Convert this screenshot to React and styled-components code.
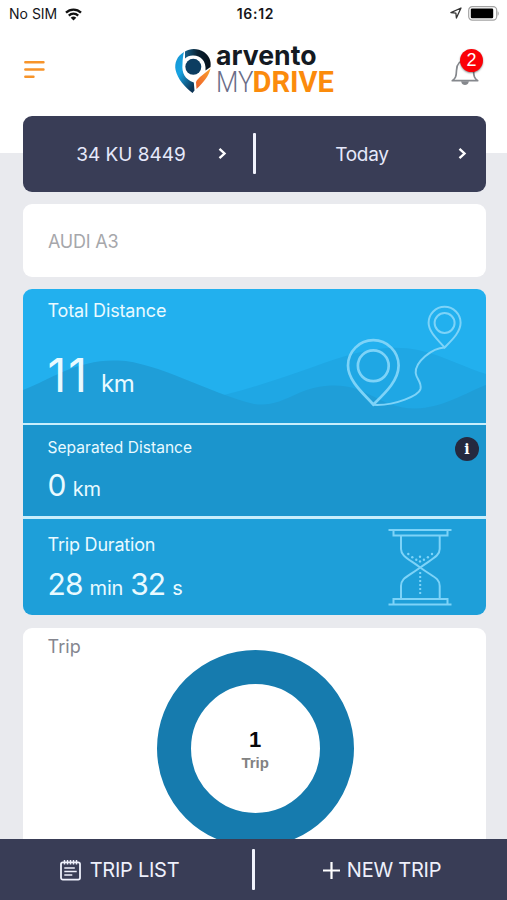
import styled, { createGlobalStyle } from "styled-components";

const GlobalStyle = createGlobalStyle`
  * {
    box-sizing: border-box;
  }

  body {
    margin: 0;
    font-family: Inter, "Liberation Sans", sans-serif;
  }
`;

// Whole screen, white behind the header and grey below it
const Screen = styled.div`
  display: flex;
  flex-direction: column;
  width: 507px;
  height: 900px;
  overflow: hidden;
  background: linear-gradient(#fff 153.5px, #e9eaee 153.5px);
`;

// Status bar
const StatusBar = styled.div`
  display: grid;
  grid-template-columns: 1fr auto 1fr;
  align-items: center;
  flex: none;
  height: 28px;
  padding: 0 8px 0 9px;
  font-size: 14px;
  line-height: 28px;
  color: #16161a;
`;

const Carrier = styled.div`
  display: flex;
  align-items: center;
  gap: 8px;
`;

const Clock = styled.div`
  padding-left: 3px;
  font-weight: 600;
  letter-spacing: 0.7px;
`;

const StatusIcons = styled.div`
  display: flex;
  align-items: center;
  justify-content: flex-end;
  gap: 6px;
  padding-bottom: 2px;
`;

// Header
const Header = styled.header`
  display: flex;
  align-items: center;
  justify-content: space-between;
  flex: none;
  height: 88px;
  padding: 0 28px 6px 24px;
`;

const IconButton = styled.button`
  position: relative;
  display: flex;
  padding: ${(props) => props.$drop || 0}px 0 0;
  border: 0;
  background: none;
`;

const LogoMark = styled.svg`
  margin: 2px 0 0 13px;
  overflow: visible;
`;

const Badge = styled.span`
  position: absolute;
  top: -4px;
  right: -4px;
  width: 23px;
  height: 23px;
  border-radius: 50%;
  background: #fb0007;
  box-shadow: 0 1px 2px rgba(0, 0, 0, 0.45);
  color: #fff;
  font-size: 18px;
  font-weight: 500;
  line-height: 23px;
  text-align: center;
`;

// Scrolling content
const Content = styled.main`
  display: flex;
  flex-direction: column;
  flex: 1;
  gap: 12.5px;
  min-height: 0;
  padding: 0 21px 0 23px;
  overflow: hidden;
`;

const Selector = styled.div`
  display: grid;
  grid-template-columns: 230px 3px 230px;
  align-items: center;
  flex: none;
  height: 75.5px;
  border-radius: 9px;
  background: #393d56;
`;

const SelectorItem = styled.button`
  display: flex;
  align-items: center;
  padding: 0 ${(props) => props.$end}px 0 ${(props) => props.$start}px;
  border: 0;
  background: none;
  color: #e6e9fb;
  font-family: inherit;
  font-size: 19px;
  letter-spacing: ${(props) => props.$spacing}px;
  line-height: 24px;
`;

const SelectorLabel = styled.span`
  flex: 1;
  padding-top: 2px;
  text-align: center;
`;

const Divider = styled.span`
  width: 3px;
  height: 41px;
  border-radius: 1px;
  background: #f1f3fc;
`;

const VehicleCard = styled.div`
  display: flex;
  align-items: center;
  flex: none;
  height: 72.5px;
  padding: 2px 0 0 25px;
  border-radius: 9px;
  background: #fff;
  color: #a6a7ab;
  font-size: 18px;
  letter-spacing: -0.2px;
`;

// Distance and duration panels
const Stats = styled.section`
  display: flex;
  flex-direction: column;
  flex: none;
  gap: 2.5px;
  height: 326px;
  border-radius: 9px;
  overflow: hidden;
  background: #c8eefc;
`;

const Panel = styled.div`
  position: relative;
  flex: none;
  height: ${(props) => props.$height}px;
  padding: ${(props) => props.$top}px 0 0 24.5px;
  background: ${(props) => props.$color};
  color: #e9faff;
`;

const PanelTitle = styled.div`
  position: relative;
  font-size: ${(props) => props.$size}px;
  letter-spacing: ${(props) => props.$spacing}px;
  line-height: 22px;
`;

const Reading = styled.div`
  position: relative;
  display: flex;
  align-items: baseline;
  margin-top: ${(props) => props.$top}px;
  line-height: ${(props) => props.$line}px;
`;

const Amount = styled.span`
  font-size: ${(props) => props.$size}px;
  font-weight: ${(props) => props.$weight || 400};
  letter-spacing: ${(props) => props.$spacing}px;
`;

const Unit = styled.span`
  margin: 0 ${(props) => props.$after || 0}px 0 ${(props) => props.$before}px;
  font-size: ${(props) => props.$size}px;
  letter-spacing: ${(props) => props.$spacing || 0}px;
`;

const Backdrop = styled.svg`
  position: absolute;
  top: 0;
  left: 0;
`;

const PanelArt = styled.svg`
  position: absolute;
  top: ${(props) => props.$top}px;
  right: ${(props) => props.$right}px;
  fill: none;
  stroke: #7dd3f8;
`;

const InfoButton = styled.button`
  position: absolute;
  top: 12px;
  right: 7px;
  display: flex;
  align-items: center;
  justify-content: center;
  width: 24px;
  height: 24px;
  padding: 0;
  border: 0;
  border-radius: 50%;
  background: #25293f;
  color: #fff;
  font-family: "DejaVu Serif", serif;
  font-size: 14px;
  font-weight: 700;
  line-height: 24px;
`;

// Trip chart
const TripCard = styled.section`
  flex: none;
  height: 260px;
  padding-top: 8px;
  border-radius: 9px;
  background: #fff;
`;

const TripTitle = styled.div`
  padding-left: 24.5px;
  color: #85868f;
  font-size: 18px;
  letter-spacing: 0.1px;
  line-height: 22px;
`;

const Ring = styled.div`
  display: flex;
  flex-direction: column;
  align-items: center;
  justify-content: center;
  width: 197px;
  height: 197px;
  margin: -8px 0 0 133.7px;
  border: 34px solid #167bae;
  border-radius: 50%;
  font-family: "Liberation Sans", Arial, sans-serif;
  font-weight: 700;
`;

const RingValue = styled.div`
  margin-top: 6px;
  color: #08080a;
  font-size: 22px;
  line-height: 24px;
`;

const RingLabel = styled.div`
  color: #828282;
  font-size: 15px;
  line-height: 22px;
`;

// Bottom actions
const Footer = styled.footer`
  display: grid;
  grid-template-columns: 252px 3px 252px;
  align-items: center;
  flex: none;
  height: 61px;
  background: #393d56;
`;

const FooterButton = styled.button`
  display: flex;
  align-items: center;
  justify-content: center;
  gap: ${(props) => props.$gap}px;
  padding: 1px ${(props) => props.$end}px 0 ${(props) => props.$start || 0}px;
  border: 0;
  background: none;
  color: #eef0fb;
  font-family: inherit;
  font-size: 20px;
  letter-spacing: -0.25px;
  line-height: 24px;
`;

const WifiIcon = () => (
  <svg width="17" height="13" viewBox="0 0 17 13">
    <g fill="none" stroke="#111" strokeWidth="2.3">
      <path d="M1 4.6a10.8 10.8 0 0 1 15 0" />
      <path d="M3.8 7.6a6.8 6.8 0 0 1 9.4 0" />
    </g>
    <path d="M8.5 12.6 5.7 9.8a4 4 0 0 1 5.6 0Z" fill="#111" />
  </svg>
);

const LocationIcon = () => (
  <svg width="12" height="12" viewBox="0 0 12 12">
    <path
      d="M11 1 .9 5.6l5 .6.5 4.8Z"
      fill="none"
      stroke="#333"
      strokeWidth="1.3"
      strokeLinejoin="round"
    />
  </svg>
);

const BatteryIcon = () => (
  <svg width="31" height="15" viewBox="0 0 31 15">
    <rect x=".7" y=".7" width="28" height="13.4" rx="3.6" fill="none" stroke="#a3a3a3" strokeWidth="1.2" />
    <rect x="2.8" y="2.6" width="22.4" height="9.7" rx="1.2" fill="#000" />
    <path d="M29.6 5.2c1.5.5 1.5 4 0 4.5Z" fill="#a3a3a3" />
  </svg>
);

const MenuIcon = () => (
  <svg width="21" height="19" viewBox="0 0 21 19">
    <path
      d="M1.3 2.2h18.2M1.3 9.5h18.2M1.3 16.8h8.2"
      stroke="#f7942a"
      strokeWidth="2.4"
      strokeLinecap="round"
    />
  </svg>
);

const Logo = () => (
  <LogoMark width="162" height="52" viewBox="0 0 162 52">
    <defs>
      <linearGradient id="pinBlue" x1="0" y1="0" x2=".7" y2="1">
        <stop offset="0" stopColor="#1793d0" />
        <stop offset=".45" stopColor="#16a4e4" />
        <stop offset="1" stopColor="#0d3556" />
      </linearGradient>
      <linearGradient id="pinDark" x1="0" y1="0" x2="1" y2="0">
        <stop offset="0" stopColor="#16608a" />
        <stop offset=".5" stopColor="#0a2233" />
        <stop offset="1" stopColor="#071019" />
      </linearGradient>
      <linearGradient id="pinOrange" x1="1" y1="0" x2="0" y2="1">
        <stop offset="0" stopColor="#f9a12c" />
        <stop offset="1" stopColor="#ee5f2b" />
      </linearGradient>
    </defs>
    <path
      d="M10 8C3 12 .3 19 1.6 26C3.5 35 11 43 18.5 49L20.5 46.5L19.8 38.5C11 35.5 7.5 29 8.5 20C8.7 15 9 12 10 8Z"
      fill="url(#pinBlue)"
    />
    <path
      d="M11 7.5C16 4 24 4 30 8C35 11.5 37.5 17 36.5 23L31.5 26.5C32.5 16.5 26 11 18.5 11.5C15.5 11.6 13 12.5 11 14.5Z"
      fill="url(#pinDark)"
    />
    <path d="M36.5 24.5C35 32 29 39 22.5 45L22 38C24 33.5 31 29.5 36.5 24.5Z" fill="url(#pinOrange)" />
    <circle cx="19.3" cy="22.8" r="8" fill="#0c3d61" />
    <text
      x="42"
      y="21"
      fill="#141a22"
      fontFamily="Inter, sans-serif"
      fontSize="27"
      fontWeight="700"
      textLength="100.5"
      lengthAdjust="spacingAndGlyphs"
    >
      arvento
    </text>
    <text
      x="42"
      y="47.5"
      fill="#6b6d88"
      fontFamily="Roboto, sans-serif"
      fontSize="29"
      fontWeight="300"
      textLength="37.5"
      lengthAdjust="spacingAndGlyphs"
    >
      MY
    </text>
    <text
      x="78.5"
      y="47.5"
      fill="#fb8b0c"
      fontFamily="Roboto, sans-serif"
      fontSize="29"
      fontWeight="700"
      textLength="81.5"
      lengthAdjust="spacingAndGlyphs"
    >
      DRIVE
    </text>
  </LogoMark>
);

const BellIcon = () => (
  <svg width="28" height="28" viewBox="0 0 28 28" fill="none" stroke="#85888d" strokeWidth="1.7">
    <path
      d="M1.3 22.7C4.5 20.5 5.3 18.5 5.5 12.5C5.7 6.5 8.5 2.5 14 2.5S22.3 6.5 22.5 12.5C22.7 18.5 23.5 20.5 26.7 22.7Z"
      strokeLinejoin="round"
    />
    <path d="M11.2 24a2.9 2.9 0 0 0 5.6 0Z" fill="#85888d" />
  </svg>
);

const ChevronIcon = () => (
  <svg width="9" height="13" viewBox="0 0 9 13">
    <path d="m1.5 1.8 5 4.7-5 4.7" fill="none" stroke="#fff" strokeWidth="2.4" />
  </svg>
);

const Hills = () => (
  <Backdrop width="463" height="134" viewBox="0 0 463 134">
    <path d="M170 113C215 104 250 92 290 78C325 65 360 54 395 61C422 67 445 80 463 85V134H170Z" fill="#1fa7e4" />
    <path
      d="M0 101C28 90 55 70 95 71.5C135 73 185 104 231 115C262 119 272 98 308 96.5C345 95 355 119 392 119.5C420 119 442 104 463 96V134H0Z"
      fill="#1f9ed8"
    />
  </Backdrop>
);

const RouteArt = () => (
  <PanelArt width="116" height="104" viewBox="0 0 116 104" $top={15} $right={24} strokeWidth="2">
    <g strokeWidth="2.7">
      <path d="M27.3 100.5C18 90 2 77 2 61.5a25.3 25.3 0 0 1 50.6 0C52.6 77 38 90 27.3 100.5Z" />
      <circle cx="27.3" cy="61.8" r="15.4" />
    </g>
    <path d="M98.6 43.5C92 36 82.6 28 82.6 18.8a16 16 0 0 1 32 0C114.6 28 106 36 98.6 43.5Z" />
    <circle cx="98.6" cy="19" r="10" />
    <path d="M98.6 43.5C86 44 69 58 69.7 69C70.3 75 76 78 74.5 85C73 91 50 102 27.3 100.8" />
  </PanelArt>
);

// Sand grains in the upper bulb
const GRAINS = [
  [20.3, 26],
  [24.3, 29.3],
  [28.3, 31.8],
  [32, 28.8],
  [32, 33.4],
  [35.9, 31.8],
  [39.9, 29.3],
  [44, 26],
];

const HourglassArt = () => (
  <PanelArt width="64" height="79" viewBox="0 0 64 79" $top={9} $right={34} strokeWidth="2">
    <path d="M.5 2h63M5.5 2v5.5h54V2M.5 76.5h63M5.5 76.5V71h54v5.5" />
    <path d="M13 7.5V21C13 28 20 30.500 32.200 39.500C45 49 51.700 50 51.700 58V71M51.700 7.500V21C51.700 28 44.500 30.500 32.200 39.500C19.500 49 13 50 13 58V71" />
    <path d="M32.2 44v22" strokeDasharray="2 2" />
    {GRAINS.map(([x, y]) => (
      <circle key={`${x}-${y}`} cx={x} cy={y} r="1.2" fill="#7dd3f8" stroke="none" />
    ))}
  </PanelArt>
);

const ListIcon = () => (
  <svg width="21" height="22" viewBox="0 0 21 22" fill="none" stroke="#eef0fb" strokeWidth="1.8">
    <rect x="1" y="3.3" width="19" height="17.3" rx="1.8" />
    <path d="M4.5 1v4.5M7.5 1v4.5M10.5 1v4.5M13.5 1v4.5M16.5 1v4.5" strokeWidth="1.5" />
    <path d="M4.3 9h10.5M4.3 12.5h12.4M4.3 16h8" strokeWidth="1.6" />
  </svg>
);

const PlusIcon = () => (
  <svg width="17" height="17" viewBox="0 0 17 17">
    <path d="M8.5 0v17M0 8.5h17" stroke="#fff" strokeWidth="2.2" />
  </svg>
);

const App = () => {
  return (
    <>
      <GlobalStyle />
      <Screen>
        <StatusBar>
          <Carrier>
            No SIM
            <WifiIcon />
          </Carrier>
          <Clock>16:12</Clock>
          <StatusIcons>
            <LocationIcon />
            <BatteryIcon />
          </StatusIcons>
        </StatusBar>

        <Header>
          <IconButton aria-label="Menu">
            <MenuIcon />
          </IconButton>
          <Logo />
          <IconButton aria-label="Notifications" $drop={5}>
            <BellIcon />
            <Badge>2</Badge>
          </IconButton>
        </Header>

        <Content>
          <Selector>
            <SelectorItem $start={21} $end={26} $spacing={0}>
              <SelectorLabel>34 KU 8449</SelectorLabel>
              <ChevronIcon />
            </SelectorItem>
            <Divider />
            <SelectorItem $start={10} $end={19} $spacing={-0.3}>
              <SelectorLabel>Today</SelectorLabel>
              <ChevronIcon />
            </SelectorItem>
          </Selector>

          <VehicleCard>AUDI A3</VehicleCard>

          <Stats>
            <Panel $height={133} $top={11} $color="#22b0ee">
              <Hills />
              <PanelTitle $size={18} $spacing={-0.15}>Total Distance</PanelTitle>
              <Reading $top={25} $line={56}>
                <Amount $size={46} $spacing={2}>11</Amount>
                <Unit $size={24} $before={12} $spacing={-0.3}>km</Unit>
              </Reading>
              <RouteArt />
            </Panel>

            <Panel $height={91.5} $top={12} $color="#1b95cd">
              <PanelTitle $size={15.5} $spacing={0.05}>Separated Distance</PanelTitle>
              <Reading $top={8} $line={36}>
                <Amount $size={30} $spacing={-0.8}>0</Amount>
                <Unit $size={20} $before={7}>km</Unit>
              </Reading>
              <InfoButton aria-label="Info">i</InfoButton>
            </Panel>

            <Panel $height={96.5} $top={15} $color="#1e9fd9">
              <PanelTitle $size={18} $spacing={-0.2}>Trip Duration</PanelTitle>
              <Reading $top={10} $line={36}>
                <Amount $size={30} $spacing={-0.9}>28</Amount>
                <Unit $size={20} $before={7} $after={7} $spacing={-0.2}>min</Unit>
                <Amount $size={30} $spacing={-0.9}>32</Amount>
                <Unit $size={20} $before={7}>s</Unit>
              </Reading>
              <HourglassArt />
            </Panel>
          </Stats>

          <TripCard>
            <TripTitle>Trip</TripTitle>
            <Ring>
              <RingValue>1</RingValue>
              <RingLabel>Trip</RingLabel>
            </Ring>
          </TripCard>
        </Content>

        <Footer>
          <FooterButton $gap={9} $end={13}>
            <ListIcon />
            TRIP LIST
          </FooterButton>
          <Divider />
          <FooterButton $gap={7} $end={0} $start={2}>
            <PlusIcon />
            NEW TRIP
          </FooterButton>
        </Footer>
      </Screen>
    </>
  );
};

export default App;
